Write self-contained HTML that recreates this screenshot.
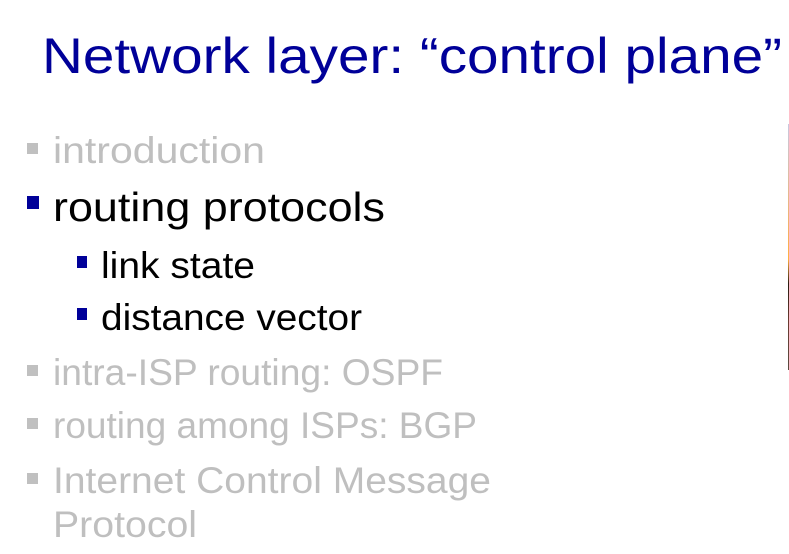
<!DOCTYPE html>
<html><head><meta charset="utf-8"><style>
html,body{margin:0;padding:0;background:#fff;width:789px;height:554px;overflow:hidden;position:relative;font-family:"Liberation Sans",sans-serif}
.t{position:absolute;white-space:nowrap;transform-origin:0 0;line-height:1}
.b{position:absolute}
</style></head><body>
<div class="t" data-w="740" style="left:42px;top:31px;font-size:50px;color:#000099">Network layer: “control plane”</div>

<div class="b" style="left:27px;top:143px;width:11px;height:11px;background:#c0c0c0"></div>
<div class="t" data-w="212" style="left:53px;top:132px;font-size:37px;color:#bfbfbf">introduction</div>

<div class="b" style="left:27px;top:196px;width:12px;height:13px;background:#000099"></div>
<div class="t" data-w="332" style="left:53px;top:187px;font-size:41px;color:#000">routing protocols</div>

<div class="b" style="left:77px;top:256px;width:10px;height:12px;background:#000099"></div>
<div class="t" data-w="154" style="left:101px;top:247px;font-size:37px;color:#000">link state</div>

<div class="b" style="left:77px;top:308px;width:10px;height:12px;background:#000099"></div>
<div class="t" data-w="261" style="left:101px;top:299px;font-size:37px;color:#000">distance vector</div>

<div class="b" style="left:27px;top:365px;width:11px;height:11px;background:#c0c0c0"></div>
<div class="t" data-w="390" style="left:53px;top:354px;font-size:37px;color:#bfbfbf">intra-ISP routing: OSPF</div>

<div class="b" style="left:27px;top:418px;width:11px;height:11px;background:#c0c0c0"></div>
<div class="t" data-w="424" style="left:53px;top:407px;font-size:37px;color:#bfbfbf">routing among ISPs: BGP</div>

<div class="b" style="left:27px;top:473px;width:11px;height:11px;background:#c0c0c0"></div>
<div class="t" data-w="438" style="left:53px;top:462px;font-size:37px;color:#bfbfbf">Internet Control Message</div>
<div class="t" data-w="144" style="left:53px;top:506px;font-size:37px;color:#bfbfbf">Protocol</div>

<div class="b" style="left:788px;top:124px;width:1px;height:246px;background:linear-gradient(#c8c8e0,#f5b060 45%,#ffb040 55%,#2a1a10 65%,#6a3a30 80%,#5a4a40)"></div>
<script>
document.querySelectorAll('.t').forEach(function(e){var w=e.getBoundingClientRect().width;var tw=+e.getAttribute('data-w');if(w>0)e.style.transform='scaleX('+(tw/w)+')';});
</script>
</body></html>
